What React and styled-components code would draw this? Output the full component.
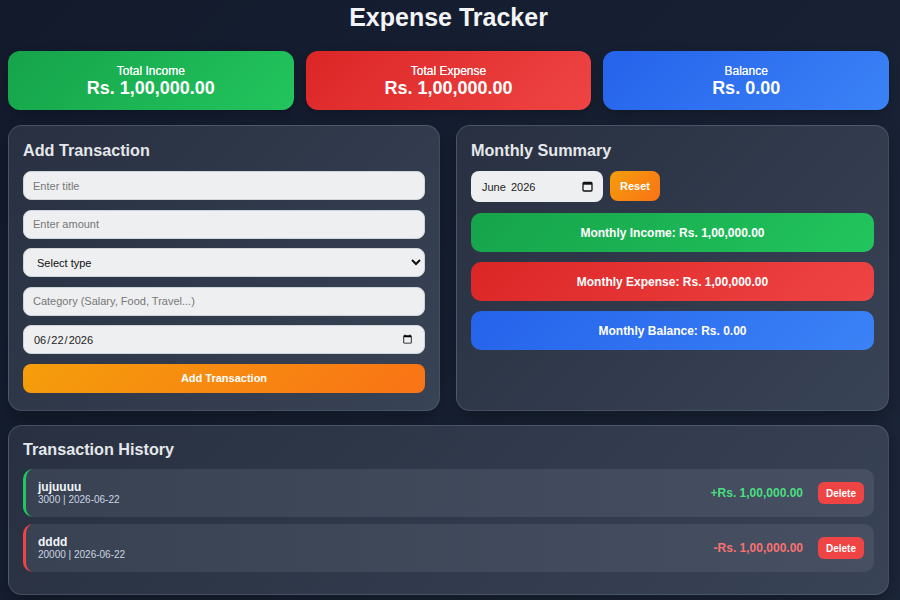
import React from "react";
import styled, { createGlobalStyle } from "styled-components";

const Global = createGlobalStyle`
  html, body { margin: 0; padding: 0; }
  body {
    font-family: "Liberation Sans", Arial, sans-serif;
    background: linear-gradient(135deg, #121a2c 0%, #1c2639 100%);
    min-height: 600px;
    color: #fff;
  }
  * { box-sizing: border-box; }
`;

const Page = styled.div`
  width: 900px;
  height: 600px;
  padding: 0 11px 0 8px;
  display: flex;
  flex-direction: column;
  overflow: hidden;
`;

const Title = styled.h1`
  margin: 3px 0 0;
  text-align: center;
  font-size: 25px;
  line-height: 28px;
  font-weight: 700;
  color: #f3f4f6;
`;

const Cards = styled.div`
  display: grid;
  grid-template-columns: repeat(3, 1fr);
  gap: 12px;
  margin-top: 20px;
`;

const gradients = {
  green: "linear-gradient(135deg, #16a34a, #22c55e)",
  red: "linear-gradient(135deg, #dc2626, #ef4444)",
  blue: "linear-gradient(135deg, #2563eb, #3b82f6)",
  orange: "linear-gradient(135deg, #f59e0b, #f97316)",
};

const Card = styled.div`
  background: ${(p) => gradients[p.$tone]};
  border-radius: 12px;
  height: 59px;
  padding: 13px 10px 0;
  text-align: center;
  box-shadow: 0 4px 10px rgba(0, 0, 0, 0.25);
`;

const CardLabel = styled.div`
  font-size: 12px;
  line-height: 14px;
  color: #f8fafc;
  text-shadow: 0 0 0.4px #fff;
`;

const CardValue = styled.div`
  font-size: 18px;
  line-height: 20px;
  font-weight: 700;
  color: #fff;
`;

const Row = styled.div`
  display: grid;
  grid-template-columns: 432px 433px;
  gap: 16px;
  margin-top: 15px;
`;

const Panel = styled.section`
  background: linear-gradient(135deg, #283041 0%, #384355 100%);
  border: 1px solid rgba(148, 163, 184, 0.25);
  border-radius: 14px;
  padding: 14px 14px 15px;
  height: ${(p) => p.$h || "auto"};
  box-shadow: 0 6px 16px rgba(0, 0, 0, 0.3);
`;

const PanelTitle = styled.h2`
  margin: 0 0 ${(p) => p.$gap || "10px"};
  font-size: 16.2px;
  line-height: 21px;
  font-weight: 700;
  color: #e5e7eb;
`;

const Form = styled.div`
  display: flex;
  flex-direction: column;
  gap: 9.6px;
`;

const fieldCss = `
  width: 100%;
  height: 29px;
  border-radius: 8px;
  border: 1px solid #cfd3da;
  background: #eeeff1;
  font-family: "Liberation Sans", Arial, sans-serif;
  font-size: 11px;
  color: #222;
  padding: 0 9px;
  outline: none;
  &::placeholder { color: #777; }
`;

const Input = styled.input`
  ${fieldCss}
`;

const Select = styled.select`
  ${fieldCss}
  padding: 0 6px 0 9px;
  color: #111;
`;

const ActionButton = styled.button`
  height: ${(p) => p.$h || "29px"};
  border: none;
  border-radius: 8px;
  background: ${gradients.orange};
  color: #fff;
  font-family: "Liberation Sans", Arial, sans-serif;
  font-weight: 700;
  font-size: 11px;
  padding: 0 10px;
  cursor: pointer;
`;

const Controls = styled.div`
  display: flex;
  gap: 7px;
  align-items: flex-start;
`;

const MonthField = styled.label`
  width: 132px;
  height: 31px;
  border-radius: 8px;
  background: #eeeff1;
  display: flex;
  align-items: center;
  justify-content: space-between;
  padding: 0 10px 0 11px;
  font-size: 11px;
  color: #222;
  word-spacing: 2px;
`;

const Bars = styled.div`
  display: flex;
  flex-direction: column;
  gap: 10px;
  margin-top: 11px;
`;

const Bar = styled.div`
  background: ${(p) => gradients[p.$tone]};
  height: 39px;
  border-radius: 10px;
  display: flex;
  align-items: center;
  justify-content: center;
  font-size: 12px;
  font-weight: 700;
  color: #fff;
`;

const History = styled(Panel)`
  margin-top: 14px;
  padding-top: 13px;
  padding-bottom: 22px;
`;

const List = styled.div`
  display: flex;
  flex-direction: column;
  gap: 7px;
`;

const Item = styled.div`
  display: flex;
  align-items: center;
  height: 48px;
  border-radius: 10px;
  border-left: 3px solid ${(p) => (p.$income ? "#22c55e" : "#ef4444")};
  background: linear-gradient(90deg, #394253 0%, #465062 100%);
  padding: 0 10px 0 12px;
`;

const ItemInfo = styled.div`
  flex: 1;
  display: flex;
  flex-direction: column;
`;

const ItemTitle = styled.div`
  font-size: 12px;
  line-height: 14px;
  font-weight: 700;
  color: #f1f5f9;
`;

const ItemMeta = styled.div`
  font-size: 10px;
  line-height: 12px;
  color: #cbd5e1;
`;

const Amount = styled.div`
  font-size: 12px;
  font-weight: 700;
  color: ${(p) => (p.$income ? "#4ade80" : "#f87171")};
  margin-right: 15px;
`;

const DeleteButton = styled.button`
  height: 22px;
  width: 46px;
  border: none;
  border-radius: 6px;
  background: #ef4444;
  color: #fff;
  font-family: "Liberation Sans", Arial, sans-serif;
  font-size: 10px;
  font-weight: 700;
  padding: 0;
`;

const CalendarIcon = () => (
  <svg width="11" height="11" viewBox="0 0 11 11" fill="none">
    <rect x="1" y="1.5" width="9" height="8.5" rx="1" stroke="#111" strokeWidth="1.3" />
    <rect x="1" y="1.5" width="9" height="2.2" fill="#111" />
  </svg>
);

const transactions = [
  { title: "jujuuuu", meta: "3000 | 2026-06-22", amount: "+Rs. 1,00,000.00", income: true },
  { title: "dddd", meta: "20000 | 2026-06-22", amount: "-Rs. 1,00,000.00", income: false },
];

export default function App() {
  return (
    <>
      <Global />
      <Page>
        <Title>Expense Tracker</Title>
        <Cards>
          <Card $tone="green">
            <CardLabel>Total Income</CardLabel>
            <CardValue>Rs. 1,00,000.00</CardValue>
          </Card>
          <Card $tone="red">
            <CardLabel>Total Expense</CardLabel>
            <CardValue>Rs. 1,00,000.00</CardValue>
          </Card>
          <Card $tone="blue">
            <CardLabel>Balance</CardLabel>
            <CardValue>Rs. 0.00</CardValue>
          </Card>
        </Cards>
        <Row>
          <Panel $h="286px">
            <PanelTitle>Add Transaction</PanelTitle>
            <Form>
              <Input placeholder="Enter title" />
              <Input placeholder="Enter amount" />
              <Select defaultValue="">
                <option value="">Select type</option>
                <option value="income">Income</option>
                <option value="expense">Expense</option>
              </Select>
              <Input placeholder="Category (Salary, Food, Travel...)" />
              <Input type="date" defaultValue="2026-06-22" />
              <ActionButton>Add Transaction</ActionButton>
            </Form>
          </Panel>
          <Panel $h="286px">
            <PanelTitle>Monthly Summary</PanelTitle>
            <Controls>
              <MonthField>
                <span>June 2026</span>
                <CalendarIcon />
              </MonthField>
              <ActionButton $h="30px">Reset</ActionButton>
            </Controls>
            <Bars>
              <Bar $tone="green">Monthly Income: Rs. 1,00,000.00</Bar>
              <Bar $tone="red">Monthly Expense: Rs. 1,00,000.00</Bar>
              <Bar $tone="blue">Monthly Balance: Rs. 0.00</Bar>
            </Bars>
          </Panel>
        </Row>
        <History>
          <PanelTitle $gap="9px">Transaction History</PanelTitle>
          <List>
            {transactions.map((t) => (
              <Item key={t.title} $income={t.income}>
                <ItemInfo>
                  <ItemTitle>{t.title}</ItemTitle>
                  <ItemMeta>{t.meta}</ItemMeta>
                </ItemInfo>
                <Amount $income={t.income}>{t.amount}</Amount>
                <DeleteButton>Delete</DeleteButton>
              </Item>
            ))}
          </List>
        </History>
      </Page>
    </>
  );
}
